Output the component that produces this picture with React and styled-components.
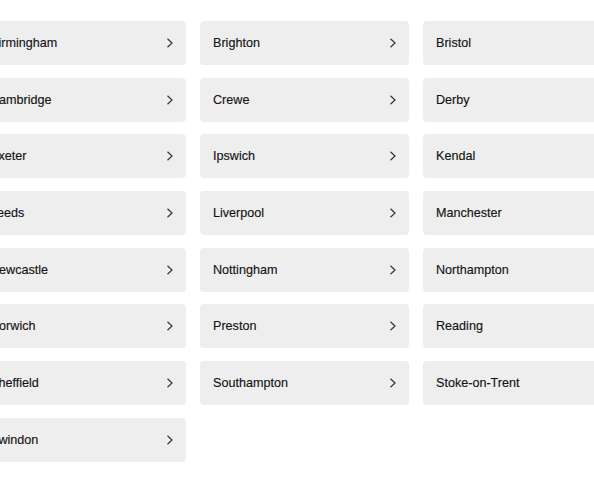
import React from 'react';
import styled, { createGlobalStyle } from 'styled-components';

const GlobalStyle = createGlobalStyle`
  html, body {
    margin: 0;
    padding: 0;
    background: #ffffff;
    overflow: hidden;
  }
  body {
    font-family: "Liberation Sans", Arial, sans-serif;
  }
`;

const cities = [
  'Birmingham', 'Brighton', 'Bristol',
  'Cambridge', 'Crewe', 'Derby',
  'Exeter', 'Ipswich', 'Kendal',
  'Leeds', 'Liverpool', 'Manchester',
  'Newcastle', 'Nottingham', 'Northampton',
  'Norwich', 'Preston', 'Reading',
  'Sheffield', 'Southampton', 'Stoke-on-Trent',
  'Swindon',
];

const Page = styled.div`
  width: 594px;
  height: 480px;
  overflow: hidden;
  padding-top: 21px;
  box-sizing: border-box;
`;

const Grid = styled.ul`
  list-style: none;
  margin: 0 0 0 -23px;
  padding: 0;
  display: grid;
  grid-template-columns: repeat(3, 209px);
  column-gap: 14px;
  row-gap: 12.7px;
  width: 655px;
`;

const Card = styled.li`
  height: 44px;
  background: #eeeeee;
  border-radius: 4px;
  display: flex;
  align-items: center;
  justify-content: space-between;
  padding: 0 12px 0 13px;
  box-sizing: border-box;
`;

const Name = styled.span`
  font-size: 12.6px;
  color: #141414;
  -webkit-text-stroke: 0.15px #141414;
`;

const Chevron = () => (
  <svg width="8" height="10" viewBox="0 0 8 10" fill="none">
    <path d="M1.5 0.8 L6 5 L1.5 9.2" stroke="#333" strokeWidth="1.2" />
  </svg>
);

export default function App() {
  return (
    <>
      <GlobalStyle />
      <Page>
        <Grid>
          {cities.map((c) => (
            <Card key={c}>
              <Name>{c}</Name>
              <Chevron />
            </Card>
          ))}
        </Grid>
      </Page>
    </>
  );
}
